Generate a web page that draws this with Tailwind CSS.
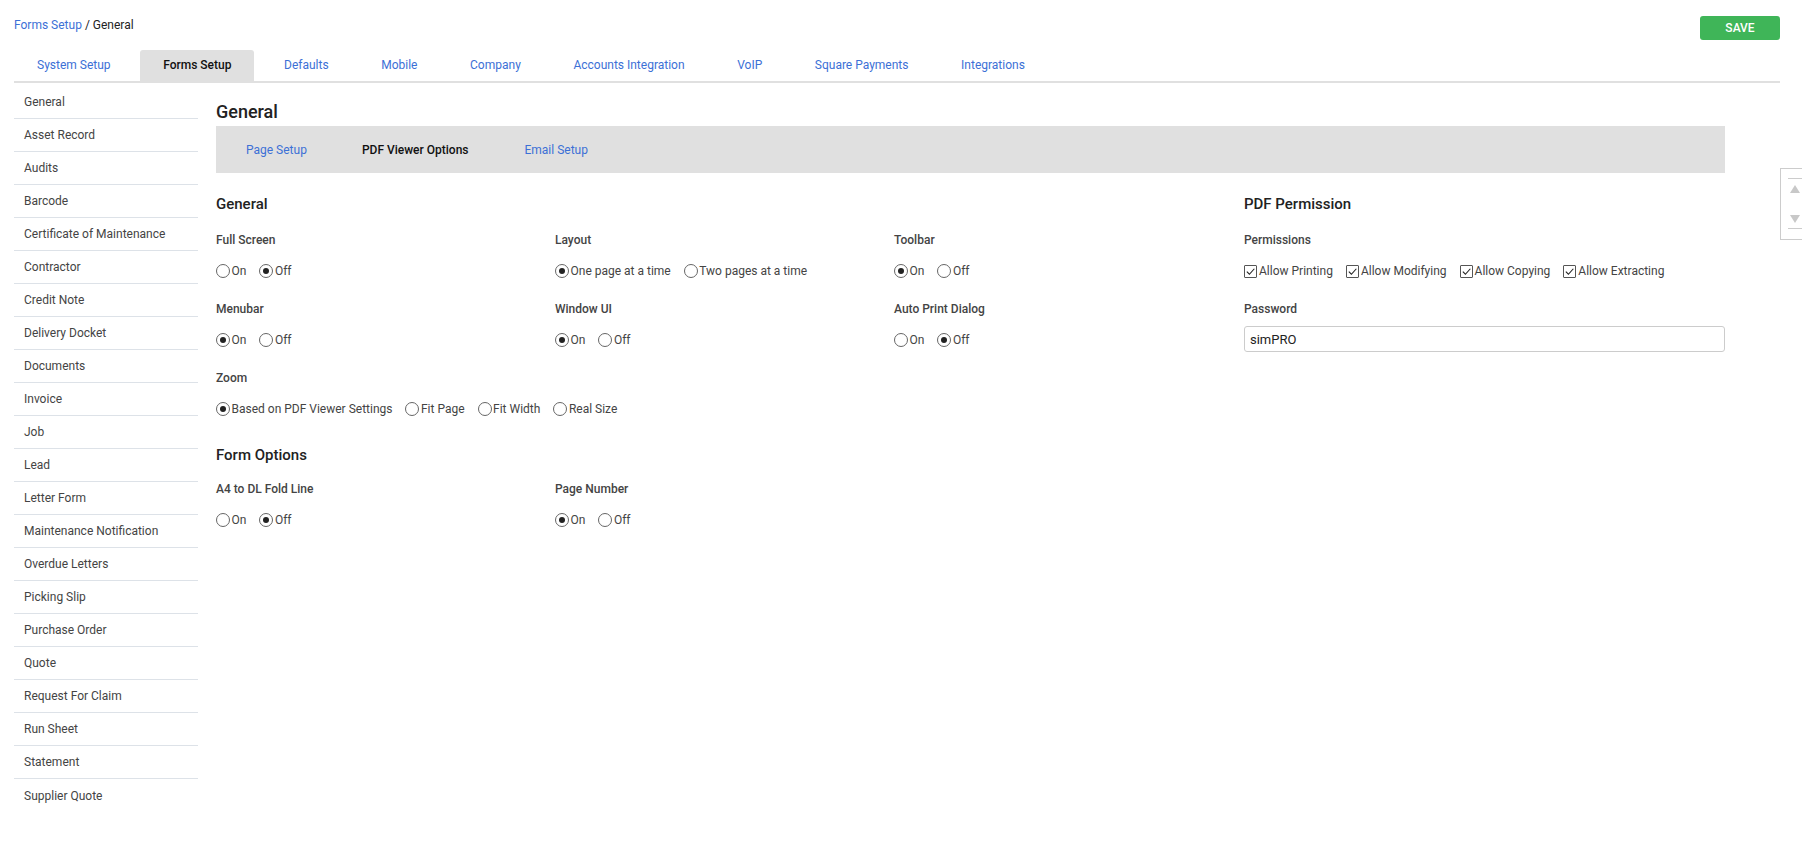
<!DOCTYPE html>
<html>
<head>
<meta charset="utf-8">
<script src="https://cdn.jsdelivr.net/npm/@tailwindcss/browser@4"></script>
</head>
<body class="bg-white overflow-hidden font-['Roboto',sans-serif] text-[12px] text-[#444]">
<div class="relative w-[1802px] h-[861px] overflow-hidden">
  <header class="pl-[14px] pr-[22px]">
    <div class="flex justify-between h-[50px]">
      <div class="pt-[18px] leading-[14px]"><a class="text-[#3c70d6]">Forms Setup</a> <span class="text-[#222]">/ General</span></div>
      <button class="mt-[16px] w-[80px] h-[24px] bg-[#3fb558] rounded-[3px] text-white font-medium">SAVE</button>
    </div>
    <nav class="flex gap-[6.6px] h-[33px] border-b-2 border-[#e0e0e0] text-[#3c70d6]">
      <a class="px-[23px] h-[31px] flex items-center pb-[2px]">System Setup</a>
      <a class="px-[23px] h-[33px] flex items-center pb-[4px] bg-[#e0e0e0] rounded-t-[3px] text-[#111] font-medium">Forms Setup</a>
      <a class="px-[23px] h-[31px] flex items-center pb-[2px]">Defaults</a>
      <a class="px-[23px] h-[31px] flex items-center pb-[2px]">Mobile</a>
      <a class="px-[23px] h-[31px] flex items-center pb-[2px]">Company</a>
      <a class="px-[23px] h-[31px] flex items-center pb-[2px]">Accounts Integration</a>
      <a class="px-[23px] h-[31px] flex items-center pb-[2px]">VoIP</a>
      <a class="px-[23px] h-[31px] flex items-center pb-[2px]">Square Payments</a>
      <a class="px-[23px] h-[31px] flex items-center pb-[2px]">Integrations</a>
    </nav>
  </header>
  <div class="flex pl-[14px] pt-[2px]">
    <aside class="w-[184px] shrink-0 pt-[1px]">
      <ul class="divide-y divide-[#dde2e8]">
        <li class="h-[33px] pl-[10px] flex items-center">General</li>
        <li class="h-[33px] pl-[10px] flex items-center">Asset Record</li>
        <li class="h-[33px] pl-[10px] flex items-center">Audits</li>
        <li class="h-[33px] pl-[10px] flex items-center">Barcode</li>
        <li class="h-[33px] pl-[10px] flex items-center">Certificate of Maintenance</li>
        <li class="h-[33px] pl-[10px] flex items-center">Contractor</li>
        <li class="h-[33px] pl-[10px] flex items-center">Credit Note</li>
        <li class="h-[33px] pl-[10px] flex items-center">Delivery Docket</li>
        <li class="h-[33px] pl-[10px] flex items-center">Documents</li>
        <li class="h-[33px] pl-[10px] flex items-center">Invoice</li>
        <li class="h-[33px] pl-[10px] flex items-center">Job</li>
        <li class="h-[33px] pl-[10px] flex items-center">Lead</li>
        <li class="h-[33px] pl-[10px] flex items-center">Letter Form</li>
        <li class="h-[33px] pl-[10px] flex items-center">Maintenance Notification</li>
        <li class="h-[33px] pl-[10px] flex items-center">Overdue Letters</li>
        <li class="h-[33px] pl-[10px] flex items-center">Picking Slip</li>
        <li class="h-[33px] pl-[10px] flex items-center">Purchase Order</li>
        <li class="h-[33px] pl-[10px] flex items-center">Quote</li>
        <li class="h-[33px] pl-[10px] flex items-center">Request For Claim</li>
        <li class="h-[33px] pl-[10px] flex items-center">Run Sheet</li>
        <li class="h-[33px] pl-[10px] flex items-center">Statement</li>
        <li class="h-[33px] pl-[10px] flex items-center">Supplier Quote</li>
      </ul>
    </aside>
    <main class="ml-[18px] w-[1509px]">
      <h1 class="h-[41px] pt-[16px] leading-[22px] text-[18px] font-medium text-[#222]">General</h1>
      <div class="h-[47px] bg-[#e0e0e0] flex items-center pl-[30px] gap-[55px] text-[#3c70d6]">
        <a>Page Setup</a><a class="text-[#111] font-medium">PDF Viewer Options</a><a class="ml-[1px]">Email Setup</a>
      </div>
      <div class="flex pt-[20px]">
        <section class="w-[1028px] shrink-0">
          <h2 class="h-[20px] pt-[1px] leading-[20px] text-[15px] font-medium text-[#222]">General</h2>
          <div class="grid grid-cols-[339px_339px_350px] mt-[17px]">
            <div class="h-[69px]"><h3 class="h-[20px] leading-[20px] font-medium">Full Screen</h3>
              <div class="flex gap-[13px] mt-[11px] h-[20px] items-center">
                <label class="flex items-center gap-[1.5px]"><span class="w-[14px] h-[14px] rounded-full border border-[#666]"></span>On</label>
                <label class="flex items-center gap-[1.5px]"><span class="w-[14px] h-[14px] rounded-full border border-[#666] flex items-center justify-center"><span class="w-[6px] h-[6px] rounded-full bg-[#222]"></span></span>Off</label>
              </div></div>
            <div class="h-[69px]"><h3 class="h-[20px] leading-[20px] font-medium">Layout</h3>
              <div class="flex gap-[13px] mt-[11px] h-[20px] items-center">
                <label class="flex items-center gap-[1.5px]"><span class="w-[14px] h-[14px] rounded-full border border-[#666] flex items-center justify-center"><span class="w-[6px] h-[6px] rounded-full bg-[#222]"></span></span>One page at a time</label>
                <label class="flex items-center gap-[1.5px]"><span class="w-[14px] h-[14px] rounded-full border border-[#666]"></span>Two pages at a time</label>
              </div></div>
            <div class="h-[69px]"><h3 class="h-[20px] leading-[20px] font-medium">Toolbar</h3>
              <div class="flex gap-[13px] mt-[11px] h-[20px] items-center">
                <label class="flex items-center gap-[1.5px]"><span class="w-[14px] h-[14px] rounded-full border border-[#666] flex items-center justify-center"><span class="w-[6px] h-[6px] rounded-full bg-[#222]"></span></span>On</label>
                <label class="flex items-center gap-[1.5px]"><span class="w-[14px] h-[14px] rounded-full border border-[#666]"></span>Off</label>
              </div></div>
            <div class="h-[69px]"><h3 class="h-[20px] leading-[20px] font-medium">Menubar</h3>
              <div class="flex gap-[13px] mt-[11px] h-[20px] items-center">
                <label class="flex items-center gap-[1.5px]"><span class="w-[14px] h-[14px] rounded-full border border-[#666] flex items-center justify-center"><span class="w-[6px] h-[6px] rounded-full bg-[#222]"></span></span>On</label>
                <label class="flex items-center gap-[1.5px]"><span class="w-[14px] h-[14px] rounded-full border border-[#666]"></span>Off</label>
              </div></div>
            <div class="h-[69px]"><h3 class="h-[20px] leading-[20px] font-medium">Window UI</h3>
              <div class="flex gap-[13px] mt-[11px] h-[20px] items-center">
                <label class="flex items-center gap-[1.5px]"><span class="w-[14px] h-[14px] rounded-full border border-[#666] flex items-center justify-center"><span class="w-[6px] h-[6px] rounded-full bg-[#222]"></span></span>On</label>
                <label class="flex items-center gap-[1.5px]"><span class="w-[14px] h-[14px] rounded-full border border-[#666]"></span>Off</label>
              </div></div>
            <div class="h-[69px]"><h3 class="h-[20px] leading-[20px] font-medium">Auto Print Dialog</h3>
              <div class="flex gap-[13px] mt-[11px] h-[20px] items-center">
                <label class="flex items-center gap-[1.5px]"><span class="w-[14px] h-[14px] rounded-full border border-[#666]"></span>On</label>
                <label class="flex items-center gap-[1.5px]"><span class="w-[14px] h-[14px] rounded-full border border-[#666] flex items-center justify-center"><span class="w-[6px] h-[6px] rounded-full bg-[#222]"></span></span>Off</label>
              </div></div>
            <div class="h-[69px] col-span-3"><h3 class="h-[20px] leading-[20px] font-medium">Zoom</h3>
              <div class="flex gap-[13px] mt-[11px] h-[20px] items-center">
                <label class="flex items-center gap-[1.5px]"><span class="w-[14px] h-[14px] rounded-full border border-[#666] flex items-center justify-center"><span class="w-[6px] h-[6px] rounded-full bg-[#222]"></span></span>Based on PDF Viewer Settings</label>
                <label class="flex items-center gap-[1.5px]"><span class="w-[14px] h-[14px] rounded-full border border-[#666]"></span>Fit Page</label>
                <label class="flex items-center gap-[1.5px]"><span class="w-[14px] h-[14px] rounded-full border border-[#666]"></span>Fit Width</label>
                <label class="flex items-center gap-[1.5px]"><span class="w-[14px] h-[14px] rounded-full border border-[#666]"></span>Real Size</label>
              </div></div>
          </div>
          <h2 class="h-[20px] mt-[7px] pt-[1px] leading-[20px] text-[15px] font-medium text-[#222]">Form Options</h2>
          <div class="grid grid-cols-[339px_339px_350px] mt-[15px]">
            <div><h3 class="h-[20px] leading-[20px] font-medium">A4 to DL Fold Line</h3>
              <div class="flex gap-[13px] mt-[11px] h-[20px] items-center">
                <label class="flex items-center gap-[1.5px]"><span class="w-[14px] h-[14px] rounded-full border border-[#666]"></span>On</label>
                <label class="flex items-center gap-[1.5px]"><span class="w-[14px] h-[14px] rounded-full border border-[#666] flex items-center justify-center"><span class="w-[6px] h-[6px] rounded-full bg-[#222]"></span></span>Off</label>
              </div></div>
            <div><h3 class="h-[20px] leading-[20px] font-medium">Page Number</h3>
              <div class="flex gap-[13px] mt-[11px] h-[20px] items-center">
                <label class="flex items-center gap-[1.5px]"><span class="w-[14px] h-[14px] rounded-full border border-[#666] flex items-center justify-center"><span class="w-[6px] h-[6px] rounded-full bg-[#222]"></span></span>On</label>
                <label class="flex items-center gap-[1.5px]"><span class="w-[14px] h-[14px] rounded-full border border-[#666]"></span>Off</label>
              </div></div>
          </div>
        </section>
        <section class="flex-1">
          <h2 class="h-[20px] pt-[1px] leading-[20px] text-[15px] font-medium text-[#222]">PDF Permission</h2>
          <div class="mt-[17px]"><h3 class="h-[20px] leading-[20px] font-medium">Permissions</h3>
            <div class="flex gap-[13px] mt-[11px] h-[20px] items-center">
              <label class="flex items-center gap-[2px]"><span class="w-[13px] h-[13px] border border-[#555] rounded-[1px] flex items-center justify-center"><svg viewBox="0 0 12 12" class="w-[11px] h-[11px]" fill="none" stroke="#222" stroke-width="1.2"><path d="M2 6.2 4.8 9 10.2 3"/></svg></span>Allow Printing</label>
              <label class="flex items-center gap-[2px]"><span class="w-[13px] h-[13px] border border-[#555] rounded-[1px] flex items-center justify-center"><svg viewBox="0 0 12 12" class="w-[11px] h-[11px]" fill="none" stroke="#222" stroke-width="1.2"><path d="M2 6.2 4.8 9 10.2 3"/></svg></span>Allow Modifying</label>
              <label class="flex items-center gap-[2px]"><span class="w-[13px] h-[13px] border border-[#555] rounded-[1px] flex items-center justify-center"><svg viewBox="0 0 12 12" class="w-[11px] h-[11px]" fill="none" stroke="#222" stroke-width="1.2"><path d="M2 6.2 4.8 9 10.2 3"/></svg></span>Allow Copying</label>
              <label class="flex items-center gap-[2px]"><span class="w-[13px] h-[13px] border border-[#555] rounded-[1px] flex items-center justify-center"><svg viewBox="0 0 12 12" class="w-[11px] h-[11px]" fill="none" stroke="#222" stroke-width="1.2"><path d="M2 6.2 4.8 9 10.2 3"/></svg></span>Allow Extracting</label>
            </div></div>
          <div class="mt-[18px]"><h3 class="h-[20px] leading-[20px] font-medium">Password</h3>
            <input value="simPRO" class="mt-[7px] w-full h-[26px] px-[5px] border border-[#ccc] rounded-[3px] text-[#222] text-[13px]"></div>
        </section>
      </div>
    </main>
  </div>
  <div class="absolute left-[1780px] top-[168px] w-[22px] h-[72px] border border-r-0 border-[#ccc]">
    <div class="ml-[7px] mt-[9px] h-[51px] border-y border-[#ccc] flex flex-col items-center justify-between pt-[6px] pb-[5px]">
      <svg viewBox="0 0 10 8" class="w-[10px] h-[8px]" fill="#c8c8c8"><path d="M5 0 10 8H0z"/></svg>
      <svg viewBox="0 0 10 8" class="w-[10px] h-[8px]" fill="#c8c8c8"><path d="M5 8 10 0H0z"/></svg>
    </div>
  </div>
</div>
</body>
</html>
